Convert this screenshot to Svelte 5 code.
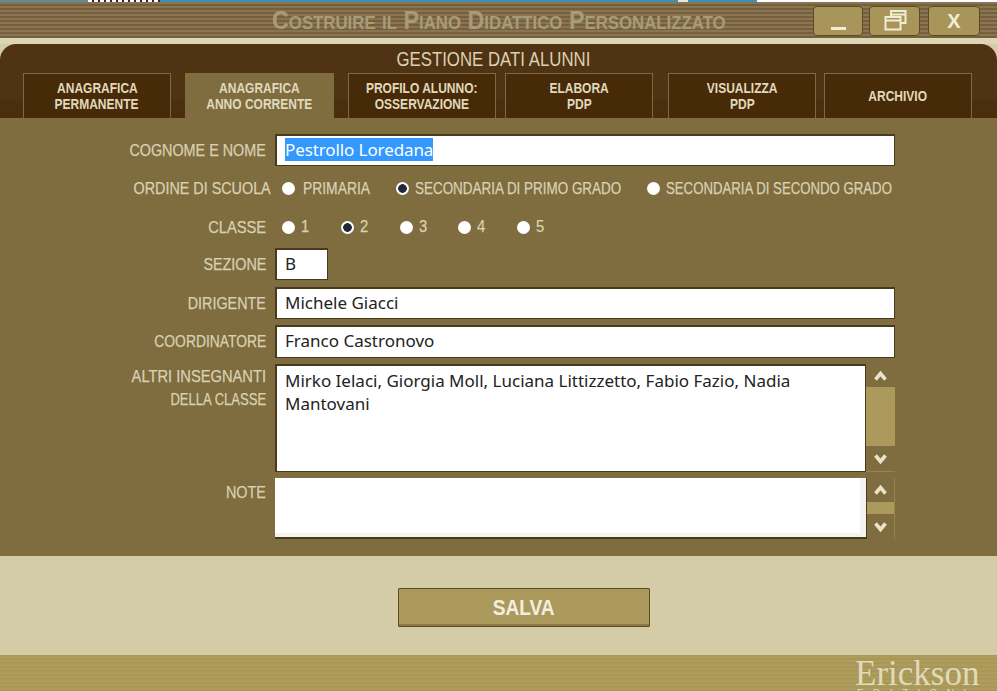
<script>
  const tabs = [
    { lines: ['ANAGRAFICA', 'PERMANENTE'], cls: 'first' },
    { lines: ['ANAGRAFICA', 'ANNO CORRENTE'], cls: 'active' },
    { lines: ['PROFILO ALUNNO:', 'OSSERVAZIONE'], cls: '' },
    { lines: ['ELABORA', 'PDP'], cls: 'm9' },
    { lines: ['VISUALIZZA', 'PDP'], cls: 'm15' },
    { lines: ['ARCHIVIO'], cls: 'm8' }
  ];
  const scuole = [
    { t: 'PRIMARIA', on: false, w: 'a' },
    { t: 'SECONDARIA DI PRIMO GRADO', on: true, w: 'b' },
    { t: 'SECONDARIA DI SECONDO GRADO', on: false, w: 'c' }
  ];
  const classi = [1, 2, 3, 4, 5];
</script>

<div class="page">
  <div class="topstrip"><div class="s1"></div><div class="s2"></div><div class="s3"></div><div class="s4"></div><div class="s5"></div></div>
  <header class="titlebar">
    <div class="title">Costruire il Piano Didattico Personalizzato</div>
    <div class="winbtns">
      <button class="win w1" aria-label="Riduci"><span class="dash"></span></button>
      <button class="win w2" aria-label="Ripristina">
        <svg width="23" height="21" viewBox="0 0 23 21" fill="none" stroke="#f1ecd8" stroke-width="2">
          <rect x="7" y="1" width="14.5" height="12"/>
          <path d="M7 4.5h14.5"/>
          <rect x="1.5" y="7" width="15" height="12.5" fill="#a8955a"/>
          <path d="M1.5 10.5h15"/>
        </svg>
      </button>
      <button class="win w3">X</button>
    </div>
  </header>
  <div class="band"></div>

  <section class="panel">
    <h1><span>GESTIONE DATI ALUNNI</span></h1>
    <nav class="tabs">
      {#each tabs as tab}
        <div class="tab {tab.cls}">
          {#each tab.lines as l}<span>{l}</span>{/each}
        </div>
      {/each}
    </nav>
  </section>

  <main class="form">
    <div class="row r-name">
      <div class="lab"><span>COGNOME E NOME</span></div>
      <div class="box"><span class="sel">Pestrollo Loredana</span></div>
    </div>
    <div class="row r-scuola">
      <div class="lab"><span>ORDINE DI SCUOLA</span></div>
      <div class="radios">
        {#each scuole as s}
          <div class="opt {s.w}"><span class="radio" class:on={s.on}></span><span class="txt">{s.t}</span></div>
        {/each}
      </div>
    </div>
    <div class="row r-classe">
      <div class="lab"><span class="wide">CLASSE</span></div>
      <div class="radios">
        {#each classi as c}
          <div class="opt num"><span class="radio" class:on={c === 2}></span><span class="txt">{c}</span></div>
        {/each}
      </div>
    </div>
    <div class="row r-sez">
      <div class="lab"><span>SEZIONE</span></div>
      <div class="box small">B</div>
    </div>
    <div class="row r-dir">
      <div class="lab"><span>DIRIGENTE</span></div>
      <div class="box">Michele Giacci</div>
    </div>
    <div class="row r-coord">
      <div class="lab"><span class="narrow">COORDINATORE</span></div>
      <div class="box">Franco Castronovo</div>
    </div>
    <div class="row r-altri">
      <div class="lab two"><span class="wide">ALTRI INSEGNANTI</span><br /><span class="tight">DELLA CLASSE</span></div>
      <div class="areawrap">
        <div class="box area">Mirko Ielaci, Giorgia Moll, Luciana Littizzetto, Fabio Fazio, Nadia Mantovani</div>
        <div class="sb">
          <div class="arrow up"><svg width="13" height="10" viewBox="0 0 13 10"><path d="M1.5 8.5l5-6 5 6" fill="none" stroke="#e8e3ca" stroke-width="3.6"/></svg></div>
          <div class="track"></div>
          <div class="arrow down"><svg width="13" height="10" viewBox="0 0 13 10"><path d="M1.5 1.5l5 6 5-6" fill="none" stroke="#e8e3ca" stroke-width="3.6"/></svg></div>
        </div>
      </div>
    </div>
    <div class="row r-note">
      <div class="lab"><span>NOTE</span></div>
      <div class="areawrap">
        <div class="box area note"></div>
        <div class="sb sb2">
          <div class="arrow up"><svg width="13" height="10" viewBox="0 0 13 10"><path d="M1.5 8.5l5-6 5 6" fill="none" stroke="#e8e3ca" stroke-width="3.6"/></svg></div>
          <div class="track"></div>
          <div class="arrow down"><svg width="13" height="10" viewBox="0 0 13 10"><path d="M1.5 1.5l5 6 5-6" fill="none" stroke="#e8e3ca" stroke-width="3.6"/></svg></div>
        </div>
      </div>
    </div>
  </main>

  <div class="actions"><button class="save"><span>SALVA</span></button></div>
  <footer class="foot"><span class="logo">Erickson</span><span class="sub">EDIZIONI</span></footer>
</div>

<style>
  :global(body) { margin: 0; }
  * { box-sizing: border-box; }
  .page {
    width: 997px; height: 691px; overflow: hidden; display: flex; flex-direction: column;
    font-family: "Liberation Sans", Arial, sans-serif;
    background: #d3cca6;
  }
  .topstrip { height: 2px; background: #fff; display: flex; }
  .s1 { width: 88px; background: #5f8a96; }
  .s2 { width: 72px; background: repeating-linear-gradient(90deg, #fff 0 4px, #2c2c2c 4px 6px); }
  .s3 { width: 518px; background: #3d8fb5; }
  .s4 { width: 10px; background: #e8e6da; }
  .s5 { width: 69px; background: #3d8fb5; }
  .titlebar {
    height: 36px; display: flex; align-items: flex-start; position: relative;
    background: repeating-linear-gradient(180deg, #8a7453 0 2px, #76603c 2px 4px);
  }
  .title {
    position: absolute; left: 272px; top: 1px; white-space: nowrap;
    font-variant: small-caps; font-size: 25px; line-height: 34px; color: #a89c78;
    font-weight: 700; transform: scaleX(.933); transform-origin: left center;
  }
  .winbtns { position: absolute; left: 813px; top: 4px; display: flex; gap: 6px; }
  .win {
    width: 50px; height: 30px; padding: 0; border: 1px solid #5c4a28; border-radius: 4px;
    background: #a8955a; display: flex; align-items: center; justify-content: center;
    color: #f1ecd8; font: 700 20px "Liberation Sans", sans-serif;
  }
  .w1 { align-items: flex-end; padding-bottom: 5px; padding-left: 1px; }
  .w2 { width: 51px; }
  .w2 svg { margin-left: 2px; margin-bottom: 1px; }
  .w3 { width: 52px; margin-left: 2px; }
  .dash { width: 15px; height: 3px; background: #f1ecd8; }
  .band { height: 6px; background: #dcd6b4; }
  .panel {
    height: 74px; border-radius: 16px 16px 0 0; padding-top: 1px;
    background: linear-gradient(180deg, #503313 0 55px, #4c2f0e 55px, #4a2d0c 100%);
    position: relative;
  }
  h1 {
    margin: 0; padding-right: 11px; text-align: center; font-weight: 400; font-size: 20px; line-height: 28px;
    color: #d9d2b4;
  }
  h1 span { display: inline-block; transform: scaleX(.84); }
  .tabs { position: absolute; left: 23px; top: 29px; display: flex; }
  .tab {
    width: 148px; height: 45px; margin-left: 14px; padding-bottom: 1px;
    display: flex; flex-direction: column; align-items: center; justify-content: center;
    border: 1px solid #7d6a3e; border-bottom: 0;
    background: #472a08; color: #e0d9bd; font-weight: 700; font-size: 15px; line-height: 16px;
  }
  .tab span { display: block; white-space: nowrap; transform: scaleX(.8); }
  .tab.first { margin-left: 0; }
  .tab.m9 { margin-left: 9px; }
  .tab.m15 { margin-left: 15px; }
  .tab.m8 { margin-left: 8px; }
  .tab.active { width: 149px; background: #7f6c3f; border-color: #7f6c3f; }
  .form {
    height: 438px; background: #7f6c3f; color: #d9d2b2; font-size: 16.5px; padding-top: 16px;
  }
  .row { display: flex; padding-right: 102px; }
  .lab { flex: none; width: 275px; padding-right: 9px; text-align: right; white-space: nowrap; -webkit-text-stroke: .25px #d9d2b2; }
  .lab span { display: inline-block; transform: scaleX(.87); transform-origin: right center; }
  .lab span.wide { transform: scaleX(.89); }
  .lab span.narrow { transform: scaleX(.84); }
  .lab span.tight { transform: scaleX(.79); }
  .r-name { height: 32px; }
  .r-scuola { height: 32px; margin-top: 6px; align-items: center; }
  .r-classe { height: 32px; margin-top: 7px; align-items: center; }
  .r-sez { margin-top: 5px; height: 32px; }
  .r-dir { margin-top: 7px; height: 32px; }
  .r-coord { margin-top: 6px; height: 33px; }
  .r-altri { margin-top: 6px; height: 108px; }
  .r-note { margin-top: 6px; height: 61px; }
  .r-name .lab, .r-sez .lab, .r-dir .lab, .r-coord .lab { line-height: 32px; }
  .r-note .lab { line-height: 20px; padding-top: 4px; }
  .lab.two { line-height: 23px; padding-top: 1px; }
  .r-scuola .lab { padding-right: 4px; }
  .box {
    flex: 1; background: #fff; color: #222; padding: 0 8px; line-height: 27px;
    font-family: "Noto Sans", "Open Sans", sans-serif; font-size: 17px;
    border: 1px solid #4a3a1c; border-width: 2px 1px 1px 2px; white-space: nowrap;
  }
  .box.small { flex: 0 0 53px; }
  .sel { background: #3399ff; color: #fff; display: inline-block; line-height: 23px; letter-spacing: -.1px; }
  .radios { display: flex; align-items: center; margin-left: 7px; }
  .opt { display: flex; align-items: center; gap: 6px; white-space: nowrap; -webkit-text-stroke: .25px #d9d2b2; }
  .txt { display: inline-block; transform: scaleX(.815); transform-origin: left center; }
  .opt.a { width: 114px; gap: 8px; } .opt.b { width: 251px; }
  .opt.a .txt { transform: scaleX(.84); }
  .opt.c .txt { transform: scaleX(.8); }
  .opt.num { width: 58.75px; gap: 6px; font-size: 17px; }
  .opt.num .txt { transform: scaleX(.87); }
  .radio {
    width: 13px; height: 13px; border-radius: 50%; background: #fff; display: block; flex: none;
  }
  .radio.on { background: radial-gradient(circle, #22283a 0 4px, #fff 4.6px); }
  .areawrap { flex: 1; display: flex; }
  .area { flex: 1; white-space: normal; padding: 3px 8px 0 8px; line-height: 23px; height: 100%; }
  .note { box-shadow: inset -6px -4px 0 #f4f3ef; border-width: 0 1px 2px 0; }
  .sb { width: 29px; display: flex; flex-direction: column; border-bottom: 1px solid #968551; }
  .arrow { display: flex; align-items: center; justify-content: center; background: #7f6c3f; }
  .up { height: 23px; }
  .down { height: 25px; }
  .track { flex: 1; background: #ab9a5c; }
  .sb2 { border-right: 1px solid #968551; border-bottom: 0; width: 28px; }
  .sb2 .up { height: 24px; }
  .actions { height: 99px; display: flex; justify-content: center; padding-top: 32px; padding-left: 50px; background: #d3cca6; }
  .save {
    width: 252px; height: 39px; background: #ab9a5c; border: 1px solid #5c4b22; border-radius: 1px;
    box-shadow: inset 0 -2px 0 #8c7a42; color: #f2eee0; font-weight: 700; font-size: 22px;
    font-family: inherit; padding: 0;
  }
  .save span { display: inline-block; transform: scaleX(.87); }
  .foot {
    height: 36px; position: relative; overflow: hidden;
    background: repeating-linear-gradient(180deg, #ae9c5b 0 2px, #a9975a 2px 4px);
    border-top: 1px solid #a8965a;
  }
  .logo {
    position: absolute; left: 855px; top: 3px; font-family: "Liberation Serif", serif;
    font-size: 35px; line-height: 30px; color: #e0dabc;
  }
  .sub {
    position: absolute; left: 857px; top: 33px; font-size: 10px; line-height: 10px;
    letter-spacing: 9.4px; color: #e0dabc; white-space: nowrap;
  }
</style>
